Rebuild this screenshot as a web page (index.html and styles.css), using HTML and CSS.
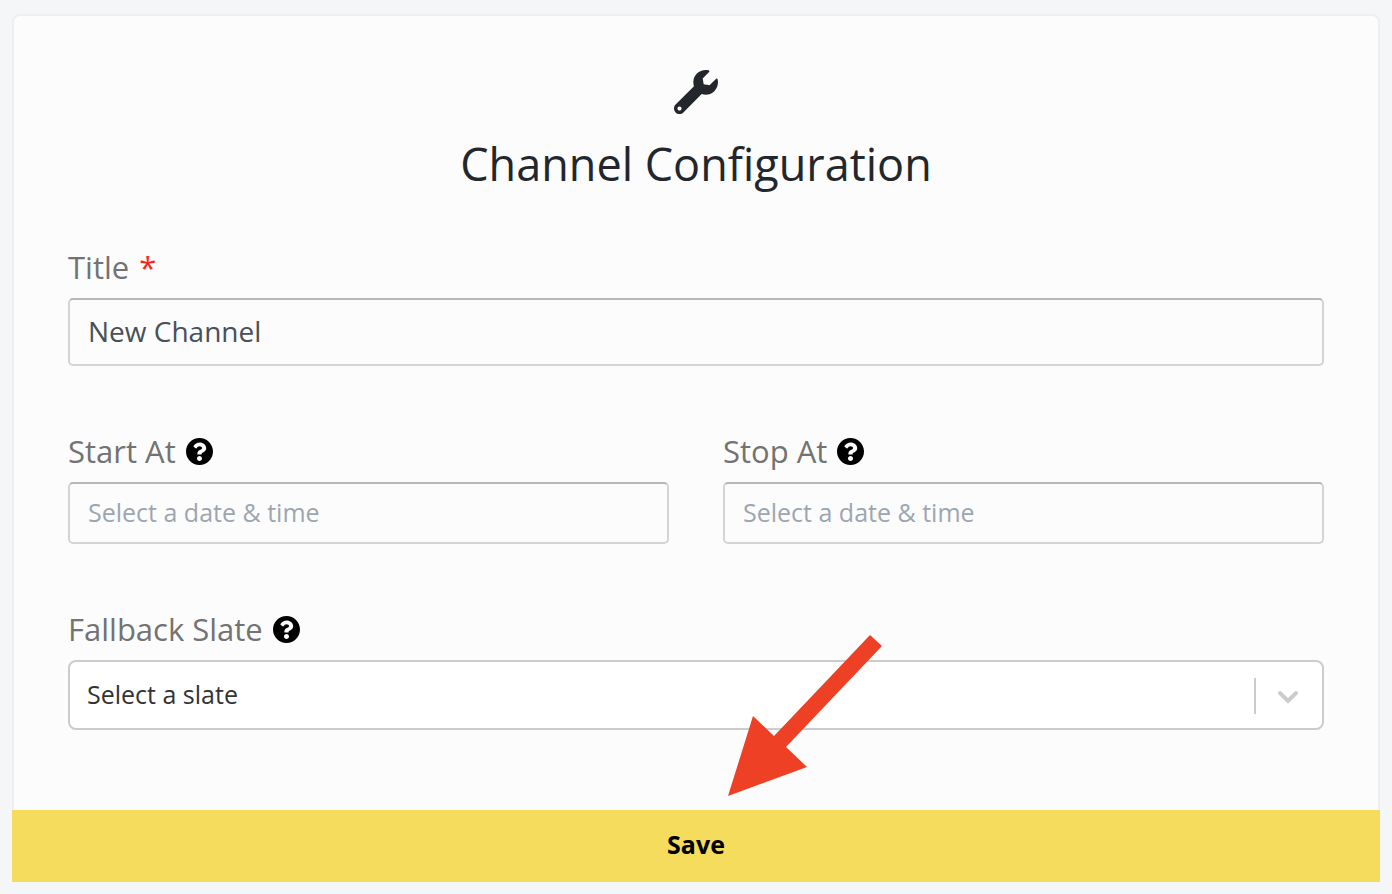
FILE: index.html
```html
<!DOCTYPE html>
<html lang="en">
<head>
    <meta charset="UTF-8">
    <meta name="viewport" content="width=device-width, initial-scale=1.0">
    <title>Channel Configuration</title>
    <link rel="stylesheet" href="styles.css">
</head>

<body>
    <!-- shared help icon -->
    <svg class="sprite" aria-hidden="true">
        <symbol id="help" viewBox="8 8 496 496">
            <path d="M504 256c0 136.997-111.043 248-248 248S8 392.997 8 256C8 119.083 119.043 8 256 8s248 111.083 248 248zM262.655 90c-54.497 0-89.255 22.957-116.549 63.758-3.536 5.286-2.353 12.415 2.715 16.258l34.699 26.31c5.205 3.947 12.621 3.008 16.665-2.122 17.864-22.658 30.113-35.797 57.303-35.797 20.429 0 45.698 13.148 45.698 32.958 0 14.976-12.363 22.667-32.534 33.976C247.128 238.528 216 254.941 216 296v4c0 6.627 5.373 12 12 12h56c6.627 0 12-5.373 12-12v-1.333c0-28.462 83.186-29.647 83.186-106.667 0-58.002-60.165-102-116.531-102zM256 338c-25.365 0-46 20.635-46 46 0 25.364 20.635 46 46 46s46-20.636 46-46c0-25.365-20.635-46-46-46z"/>
        </symbol>
    </svg>

    <form class="card">
        <div class="card-body">
            <div class="header">
                <svg class="wrench" viewBox="0 0 512 512" aria-hidden="true">
                    <path d="M507.73 109.1c-2.24-9.03-13.54-12.09-20.12-5.51l-74.36 74.36-67.88-11.31-11.31-67.88 74.36-74.36c6.62-6.62 3.43-17.9-5.66-20.16-47.38-11.74-99.55.91-136.58 37.93-39.64 39.64-50.55 97.1-34.05 147.2L18.74 402.76c-24.99 24.99-24.99 65.51 0 90.5 24.99 24.99 65.51 24.99 90.5 0l213.21-213.21c50.12 16.71 107.47 5.68 147.37-34.22 37.07-37.07 49.7-89.32 37.91-136.73zM64 472c-13.25 0-24-10.75-24-24 0-13.26 10.75-24 24-24s24 10.74 24 24c0 13.25-10.75 24-24 24z"/>
                </svg>
                <h1>Channel Configuration</h1>
            </div>

            <div class="field">
                <label for="title">Title <span class="required">*</span></label>
                <input type="text" id="title" class="input-title" value="New Channel">
            </div>

            <div class="row">
                <div class="field">
                    <label for="startAt">Start At <svg class="help"><use href="#help"/></svg></label>
                    <input type="text" id="startAt" placeholder="Select a date &amp; time">
                </div>
                <div class="field">
                    <label for="stopAt">Stop At <svg class="help"><use href="#help"/></svg></label>
                    <input type="text" id="stopAt" placeholder="Select a date &amp; time">
                </div>
            </div>

            <div class="field">
                <label for="slate">Fallback Slate <svg class="help"><use href="#help"/></svg></label>
                <div class="select">
                    <select id="slate">
                        <option>Select a slate</option>
                    </select>
                    <span class="indicator">
                        <svg viewBox="0 0 30 20"><path d="M7 7l8 8 8-8"/></svg>
                    </span>
                </div>
            </div>
        </div>

        <button type="submit" class="save">Save</button>

        <svg class="arrow" viewBox="0 0 154 161" aria-hidden="true">
            <path d="M0 161L25 81L46 101L142 0L154 11L58 112L79 132Z"/>
        </svg>
    </form>
</body>
</html>
```

FILE: styles.css
```css
* {
    box-sizing: border-box;
}

body {
    margin: 0;
    padding: 14px 12px 12px;
    background-color: #f4f6f8;
    font-family: "Open Sans", sans-serif;
    color: #23272d;
}

.sprite {
    display: none;
}

.card {
    position: relative;
}

.card-body {
    display: flex;
    flex-direction: column;
    padding: 54px 54px 80px;
    background-color: #fcfcfc;
    border: 2px solid #efefef;
    border-bottom: 0;
    border-radius: 8px 8px 0 0;
}

.header {
    text-align: center;
    margin-bottom: 50px;
}

.wrench {
    display: block;
    width: 44px;
    height: 44px;
    margin: 0 auto 18px;
    fill: #23272d;
}

h1 {
    margin: 0;
    font-size: 45px;
    font-weight: 400;
    line-height: 64px;
}

.field {
    display: flex;
    flex-direction: column;
}

.row {
    display: grid;
    grid-template-columns: 1fr 1fr;
    gap: 54px;
    margin: 64px 0;
}

label {
    display: flex;
    align-items: center;
    gap: 10px;
    margin-bottom: 10px;
    font-size: 31px;
    line-height: 42px;
    color: #737373;
}

.required {
    color: #f5291b;
}

.help {
    width: 27px;
    height: 27px;
    fill: #000;
}

input {
    width: 100%;
    height: 62px;
    padding: 0 18px 2px;
    border: 2px solid #d4d4d4;
    border-top-color: #b8b8b8;
    border-radius: 5px;
    background-color: #fcfcfc;
    font-family: inherit;
    font-size: 25px;
    color: #495057;
}

.input-title {
    height: 68px;
    font-size: 28px;
}

input::placeholder {
    color: #9da6b0;
    opacity: 1;
}

.select {
    position: relative;
}

select {
    display: block;
    width: 100%;
    height: 70px;
    padding: 0 90px 2px 17px;
    appearance: none;
    border: 2px solid #ccc;
    border-radius: 8px;
    background-color: #fff;
    font-family: inherit;
    font-size: 25px;
    color: #333;
}

/* separator and chevron, drawn over the select */
.indicator {
    position: absolute;
    top: 18px;
    right: 21px;
    display: flex;
    align-items: center;
    height: 36px;
    padding-left: 17px;
    border-left: 2px solid #ccc;
    pointer-events: none;
}

.indicator svg {
    width: 30px;
    height: 20px;
    fill: none;
    stroke: #ccc;
    stroke-width: 4;
    stroke-linecap: round;
}

.save {
    display: block;
    width: 100%;
    height: 72px;
    padding: 0 0 4px;
    border: 0;
    background-color: #f5dc5d;
    font-family: inherit;
    font-size: 25px;
    font-weight: 700;
    color: #000;
}

.arrow {
    position: absolute;
    left: calc(50% + 32px);
    bottom: 86px;
    width: 154px;
    height: 161px;
    fill: #ed4024;
    pointer-events: none;
}
```
